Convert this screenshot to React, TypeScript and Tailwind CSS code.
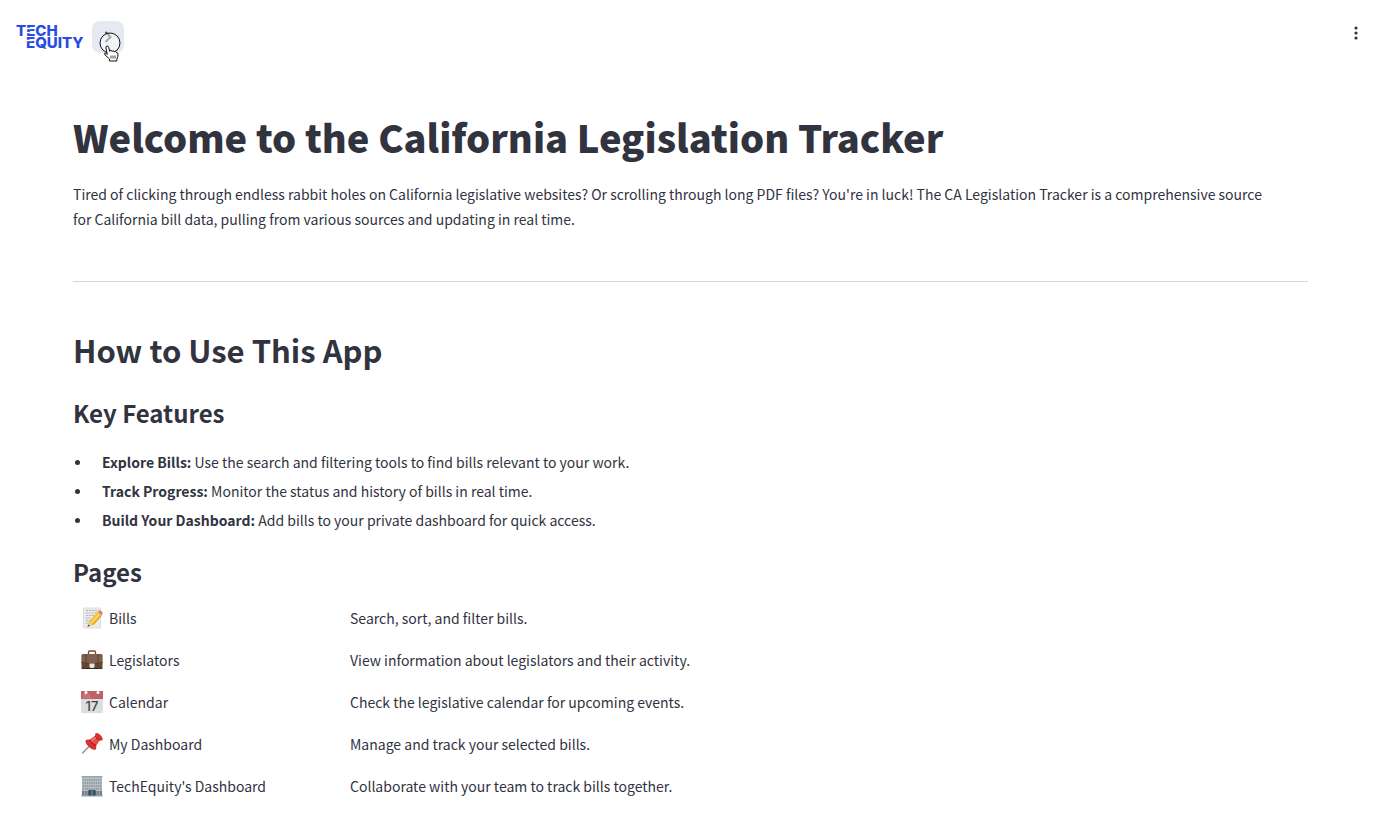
import React from "react";

const pages = [
  { name: "Bills", text: "Search, sort, and filter bills.", icon: <MemoIcon /> },
  { name: "Legislators", text: "View information about legislators and their activity.", icon: <BriefcaseIcon /> },
  { name: "Calendar", text: "Check the legislative calendar for upcoming events.", icon: <CalendarIcon /> },
  { name: "My Dashboard", text: "Manage and track your selected bills.", icon: <PinIcon /> },
  { name: "TechEquity's Dashboard", text: "Collaborate with your team to track bills together.", icon: <BuildingIcon /> },
];

const features = [
  { name: "Explore Bills:", text: "Use the search and filtering tools to find bills relevant to your work." },
  { name: "Track Progress:", text: "Monitor the status and history of bills in real time." },
  { name: "Build Your Dashboard:", text: "Add bills to your private dashboard for quick access." },
];

function MemoIcon() {
  return (
    <svg viewBox="0 0 22 22" className="size-[22px]" aria-hidden="true">
      <path d="M2.5 1h17v20h-17z" fill="#ececec" stroke="#d2d2d2" strokeWidth=".7" />
      <path d="M5 3.5h12M4.5 6h11M5 8.5h9M4.5 11h6M5 13.5h5M4.5 16h4" stroke="#b4b4b4" strokeWidth="1" strokeDasharray="2.2 .7" />
      <path d="M6.5 19.8l1.700-5.500L16.500 5l4 3.500-8.500 9.500z" fill="#f5bf33" />
      <path d="M10 16.300L18.500 6.800" stroke="#fbdc6b" strokeWidth="1.300" />
      <path d="M12 18l8.500-9.500" stroke="#d98a1c" strokeWidth="1" />
      <path d="M16.500 5l1.500-1.500q1-.9 2.500.4t1.200 2.600L20.500 8.500z" fill="#e2817c" />
      <path d="M6.500 19.800l1.700-5.500 3.800 3.700z" fill="#e9cda0" />
      <path d="M6.500 19.800l.7-2.300 1.600 1.600z" fill="#444" />
    </svg>
  );
}

function BriefcaseIcon() {
  return (
    <svg viewBox="0 0 22 22" className="size-[22px]" aria-hidden="true">
      <path d="M7.500 5V3q0-1 1-1h5q1 0 1 1v2" fill="none" stroke="#6b4b3b" strokeWidth="1.300" />
      <rect x=".5" y="5" width="21" height="15" rx="1.500" fill="#674736" />
      <path d="M1.500 5h19l1 8.500q-10.500 2.600-21 0z" fill="#80604d" />
      <path d="M.5 13.500q10.500 2.600 21 0" fill="none" stroke="#4a3226" strokeWidth=".8" />
      <path d="M5 5v15M17 5v15" stroke="#573c2f" strokeWidth=".9" />
      <path d="M8.500 14.500h5v3l-1 1.500h-3l-1-1.500z" fill="#e8e4df" />
      <path d="M.7 19.500h20.600" stroke="#3b271e" strokeWidth="1" />
    </svg>
  );
}

function CalendarIcon() {
  return (
    <svg viewBox="0 0 22 22" className="size-[22px]" aria-hidden="true">
      <path d="M0 0h22v22H0z" fill="#dcdddf" />
      <path d="M0 0h22v8H0z" fill="#bd6365" />
      <circle cx="5" cy="1.500" r="1.500" fill="#fff" />
      <circle cx="17" cy="1.500" r="1.500" fill="#fff" />
      <text x="1.500" y="7" fontFamily="Liberation Sans, sans-serif" fontSize="5" fill="#dba09f">JUL</text>
      <text x="11" y="19.500" textAnchor="middle" fontFamily="Inter, sans-serif" fontSize="13" fontWeight="500" fill="#42464c">17</text>
    </svg>
  );
}

function PinIcon() {
  return (
    <svg viewBox="0 0 22 22" className="size-[22px]" aria-hidden="true">
      <path d="M1.500 20L9 12.500" stroke="#8495a5" strokeWidth="1.400" strokeLinecap="round" />
      <path d="M4.300 8q1.200-2 4.500-1.300L14.200 3q-.6-2.300.8-2.800 2-.5 4.600 2.100t2 4.400q-.7 1.300-3 .7l-3.500 5q.8 3.500-1.200 4.600-2.600.1-6-3T4.300 8z" fill="#d93232" />
      <path d="M8.800 6.700q1.400 4 6.300 5.700l3.500-5Q15 6.500 14.200 3z" fill="#ee4a46" />
      <path d="M8.800 6.700q1.400 4 6.300 5.700" fill="none" stroke="#991a20" strokeWidth="1" />
      <path d="M14.200 3q.8 3.500 4.400 4.400" fill="none" stroke="#a31e23" strokeWidth=".9" />
      <path d="M10.500 7.800l4.300-3" stroke="#ff9791" strokeWidth="1" strokeLinecap="round" />
    </svg>
  );
}

function BuildingIcon() {
  return (
    <svg viewBox="0 0 22 22" className="size-[22px]" aria-hidden="true">
      <path d="M1 2h20v19H1z" fill="#b9bec1" />
      <path d="M.5 1h21v1.500H.5z" fill="#8fa9b5" />
      <path d="M1.500 5h19M1.500 8h19M1.500 11h19M1.500 14h19" stroke="#8294a0" strokeWidth="1.500" strokeDasharray="1.400 .8" />
      <path d="M1 16h20v4.500H1z" fill="#647a88" />
      <path d="M3.500 16v4.500M6 16v4.500M16 16v4.500M18.500 16v4.500" stroke="#b3bdc3" strokeWidth=".8" />
      <path d="M7.500 15h7v6h-7z" fill="#35505f" />
      <path d="M11 15.500v5" stroke="#aebbc3" strokeWidth=".7" />
      <path d="M0 20.500h22v1H0z" fill="#98a0a4" />
    </svg>
  );
}

function Logo() {
  return (
    <svg viewBox="0 0 68 32" className="h-8 w-[68px]" role="img" aria-label="TechEquity">
      <g fontFamily="Inter, sans-serif" fontSize="15" fontWeight="800" fill="#2a4be0">
        <text x="0" y="15">TECH</text>
        <text x="10" y="27">EQUITY</text>
      </g>
      <path d="M10 7.500h5.500M10 11.700h5.500M10 19.500h6" stroke="#fff" strokeWidth="1.300" />
    </svg>
  );
}

function HandCursor() {
  return (
    <svg viewBox="0 0 24 32" className="pointer-events-none absolute top-[10px] left-[6px] h-8 w-6" aria-hidden="true">
      <circle cx="12" cy="12" r="10" fill="#fff" fillOpacity=".5" stroke="#111" strokeWidth="1" />
      <path
        d="M9.200 23.500L8 17q-.3-1.700 1-2t1.800 1.600l.8 3.800q.2-1.200 1.200-1.100t1.300 1.300q.3-1 1.200-.8t1.200 1.300q.4-.8 1.200-.5t1 1.300q.9-.4 1.200.6.500 3-1.100 5.800V30h-7.300v-2L7 24q-.9-1.500.1-2 .9-.3 2.100 1.500z"
        fill="#fff" stroke="#111" strokeWidth="1" strokeLinejoin="round"
      />
      <path d="M13 24.500v3M15 24.500v3M17 24.500v3" stroke="#111" strokeWidth=".8" />
    </svg>
  );
}

export default function App() {
  return (
    <div className="min-h-screen bg-white font-['Noto_Sans_CJK_SC','Source_Sans_Pro',sans-serif] text-sm text-[#31333f]">
      <header className="flex items-start justify-between pt-[21px] pr-5 pl-4">
        <div className="flex items-center gap-2">
          <a href="#home"><Logo /></a>
          <button type="button" aria-label="Open sidebar" className="relative size-8 rounded-lg bg-[#e6e9f1]">
            <svg viewBox="0 0 32 32" className="size-8" aria-hidden="true">
              <path d="M13.500 11l5 5-5 5" fill="none" stroke="#4b4d58" strokeWidth="2" />
            </svg>
            <HandCursor />
          </button>
        </div>
        <button type="button" aria-label="Main menu" className="mt-0.5 flex size-5 items-center justify-center">
          <svg viewBox="0 0 20 20" className="size-5" fill="#31333f" aria-hidden="true">
            <circle cx="10" cy="5" r="1.600" />
            <circle cx="10" cy="10" r="1.600" />
            <circle cx="10" cy="15" r="1.600" />
          </svg>
        </button>
      </header>
      <main className="pt-14 pr-[78px] pb-4 pl-[73px]">
        <h1 className="text-[38px] leading-[56px] font-black">Welcome to the California Legislation Tracker</h1>
        <p className="mt-[17px] pr-8 leading-[25px]">
          Tired of clicking through endless rabbit holes on California legislative websites? Or scrolling through long PDF files? You're in luck! The CA Legislation Tracker is a comprehensive source for California bill data, pulling from various sources and updating in real time.
        </p>
        <hr className="mt-[49px] mb-[46px] border-[#d6d6d9]" />
        <h2 className="text-[31px] leading-[44px] font-semibold">How to Use This App</h2>
        <h3 className="mt-6 text-[24px] leading-[34px] font-semibold">Key Features</h3>
        <ul className="mt-[18px]">
          {features.map((f) => (
            <li key={f.name} className="flex items-center leading-[29px]">
              <span className="mr-[22px] ml-0.5 size-[5px] rounded-full bg-[#31333f]" />
              <span><strong className="font-semibold">{f.name}</strong> {f.text}</span>
            </li>
          ))}
        </ul>
        <h3 className="mt-5 text-[24px] leading-[34px] font-semibold">Pages</h3>
        <ul className="mt-2">
          {pages.map((p) => (
            <li key={p.name} className="flex h-[42px] items-center">
              <a href="#page" className="flex w-[277px] items-center gap-1.5 pl-2">{p.icon}{p.name}</a>
              <span>{p.text}</span>
            </li>
          ))}
        </ul>
      </main>
    </div>
  );
}
